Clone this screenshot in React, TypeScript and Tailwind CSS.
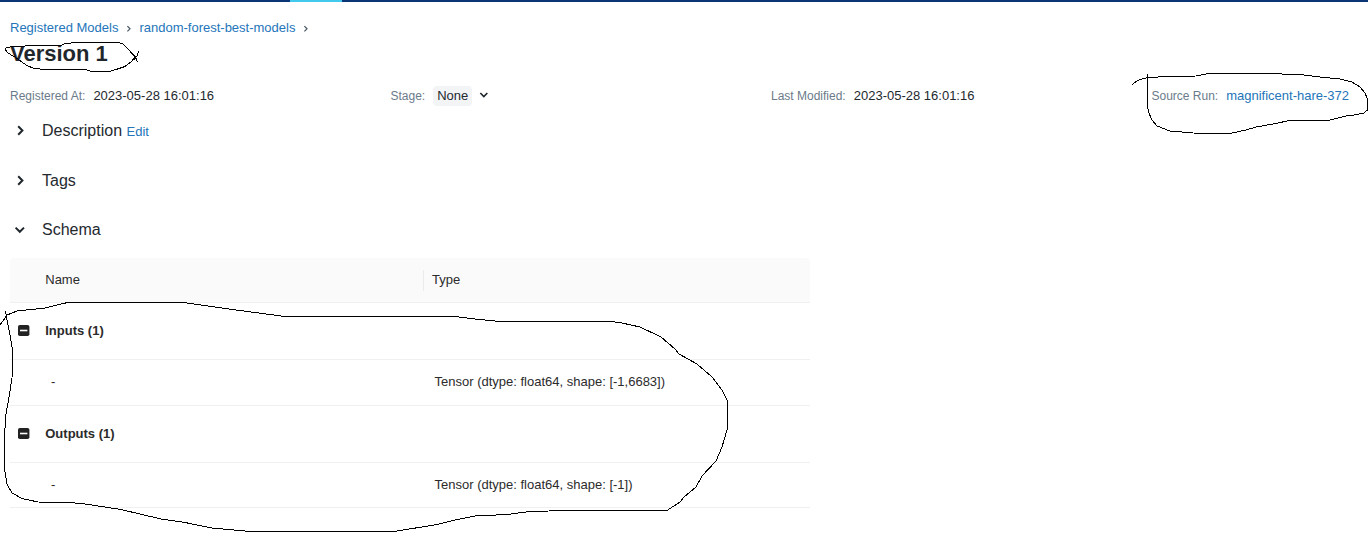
import { ReactNode } from "react";

type IconProps = { d: string; className: string; strokeWidth?: number; size?: number };

function Stroke({ d, className, strokeWidth = 2, size = 12 }: IconProps) {
  return (
    <svg
      width={size}
      height={size}
      viewBox="0 0 12 12"
      fill="none"
      stroke="currentColor"
      strokeWidth={strokeWidth}
      className={className}
    >
      <path d={d} />
    </svg>
  );
}

const RIGHT = "M4.2 1.3 8.4 5.5 4.2 9.7";
const DOWN = "M1.6 3.6 5.8 7.8 10 3.6";
const SMALL_RIGHT = "M4.4 3.2 7 5.8 4.4 8.4";

function Meta({ label, children }: { label: string; children: ReactNode }) {
  return (
    <div className="flex h-5 items-center gap-2">
      <span className="text-[12px] text-[#6b7b8a]">{label}</span>
      {children}
    </div>
  );
}

function Section({ title, open, children }: { title: string; open?: boolean; children?: ReactNode }) {
  return (
    <div className="flex h-6 items-center">
      <Stroke d={open ? DOWN : RIGHT} className="ml-1 mr-4 shrink-0 text-[#1f272d]" />
      <h2 className="text-[16px]">{title}</h2>
      {children}
    </div>
  );
}

function GroupRow({ title }: { title: string }) {
  return (
    <div className="flex h-[57px] items-center border-b border-[#f0f0f0] pl-2 font-bold">
      <svg width="12" height="11" viewBox="0 0 12 11" className="-mt-0.5 mr-[15.25px] shrink-0">
        <rect width="11.4" height="11" rx="1.8" fill="#222" />
        <path d="M2 5.5h7.4" stroke="#fff" strokeWidth="1.6" />
      </svg>
      {title}
    </div>
  );
}

function DataRow({ type, className }: { type: string; className: string }) {
  return (
    <div className={`grid grid-cols-[424.5px_1fr] border-b border-[#f0f0f0] ${className}`}>
      <span className="pl-[41px]">-</span>
      <span>{type}</span>
    </div>
  );
}

const TITLE_LOOP =
  "M138.5 51 137 56 134 60 M133.5 54 136 58 137.5 62.5 M135 57 131 62 125 66.5 116 69.5 109 71.5 91 71.5 86 69.5 44 69.5 33 68 28 66 23 63 18 59 13 56 8 53 5.5 50 6 48 12 46.5 24 46.5 26 45.5 61 45.5 65 43.5 78 42.5 118 42.5 123 44 128 49 135 57";
const RUN_LOOP =
  "M1132 84.5 1137 81 1143 78.5 1150 77.5 1167 76.5 1196 76 1208 73.5 1278 73.5 1286 74.5 1304 75 1320 77 1340 79 1352 82 1360 87 1365 93 1367.5 99 1367.5 110 1364 113 1354 115 1346 116 1328 120.5 1289 120.5 1276 123.5 1256 127 1246 130 1230 133.5 1193 133 1170 131 1157 126 1152 120 1148.5 112 1147.5 105 1147.5 74";
const TABLE_LOOP =
  "M0 325 3 321 7 315 17 311 45 308 63 303.5 68 302.5 184 302.5 190 303.5 215 307 240 310.5 285 316.5 455 316.5 475 319 500 321.5 612 321.5 622 323 640 327 661 337 675 349 679 354 697 364 712 377 722 390 727.5 401 727.5 428 722 447 716 461 702 476 696 487 684 497 680 502 667 510.5 568 510.5 530 511.5 507 514.5 475 516 455 520 437 524.5 394 531.5 250 531.5 212 528 185 522.5 161 519 121 509.5 82 503.5 68 502.5 38 502 22 498.5 12 493 7 484 5 472 4.5 440 5.5 417 9 397 12 378 12.5 350 10 335 7 320 5.5 311";

export default function App() {
  return (
    <div className="relative h-[534px] w-[1368px] overflow-hidden bg-white font-['Liberation_Sans',Arial,sans-serif] text-[13px] leading-5 text-[#24292e]">
      <div className="flex h-[2px] bg-[#0b3574]">
        <div className="ml-[290px] w-[52px] bg-[#43c9ed]" />
      </div>

      <main className="px-[10px] pt-4">
        <nav className="flex h-5 items-center text-[#2475ba]">
          <a>Registered Models</a>
          <Stroke d={SMALL_RIGHT} strokeWidth={1.2} className="mx-[4.5px] mt-0.5 text-[#445461]" />
          <a>random-forest-best-models</a>
          <Stroke d={SMALL_RIGHT} strokeWidth={1.2} className="mx-[4.5px] mt-0.5 text-[#445461]" />
        </nav>
        <h1 className="mt-0.5 text-[22px] font-bold leading-7 text-[#1f272d]">Version 1</h1>

        <div className="mt-[18px] grid grid-cols-[380.5px_380.5px_380.5px_1fr]">
          <Meta label="Registered At:">
            <span>2023-05-28 16:01:16</span>
          </Meta>
          <Meta label="Stage:">
            <span className="rounded bg-[#f3f4f6] px-1">None</span>
            <Stroke d={DOWN} size={10} className="-mt-0.5 ml-[-1px] text-[#1f272d]" />
          </Meta>
          <Meta label="Last Modified:">
            <span>2023-05-28 16:01:16</span>
          </Meta>
          <Meta label="Source Run:">
            <a className="text-[#2475ba]">magnificent-hare-372</a>
          </Meta>
        </div>

        <div className="mt-[13px] flex flex-col gap-[26px]">
          <Section title="Description">
            <a className="ml-[4.5px] mt-0.5 text-[#2475ba]">Edit</a>
          </Section>
          <Section title="Tags" />
        </div>
        <div className="mt-[25px]">
          <Section title="Schema" open />
        </div>

        <div className="mt-4 w-[800px] text-[#2b2b2b]">
          <div className="grid h-[45px] grid-cols-[413px_1fr] items-center rounded-t-sm border-b border-[#f0f0f0] bg-[#fafafa]">
            <span className="pl-[35.25px]">Name</span>
            <span className="flex h-[21px] items-center border-l border-[#ebebeb] pl-2">Type</span>
          </div>
          <GroupRow title="Inputs (1)" />
          <DataRow type="Tensor (dtype: float64, shape: [-1,6683])" className="h-[46px] pt-3" />
          <GroupRow title="Outputs (1)" />
          <DataRow type="Tensor (dtype: float64, shape: [-1])" className="h-[45px] pt-3" />
        </div>
      </main>

      <svg
        width="1368"
        height="534"
        viewBox="0 0 1368 534"
        fill="none"
        stroke="#000"
        strokeWidth="1"
        shapeRendering="crispEdges"
        className="pointer-events-none absolute inset-0"
      >
        <path d={TITLE_LOOP} />
        <path d={RUN_LOOP} />
        <path d={TABLE_LOOP} />
      </svg>
    </div>
  );
}
